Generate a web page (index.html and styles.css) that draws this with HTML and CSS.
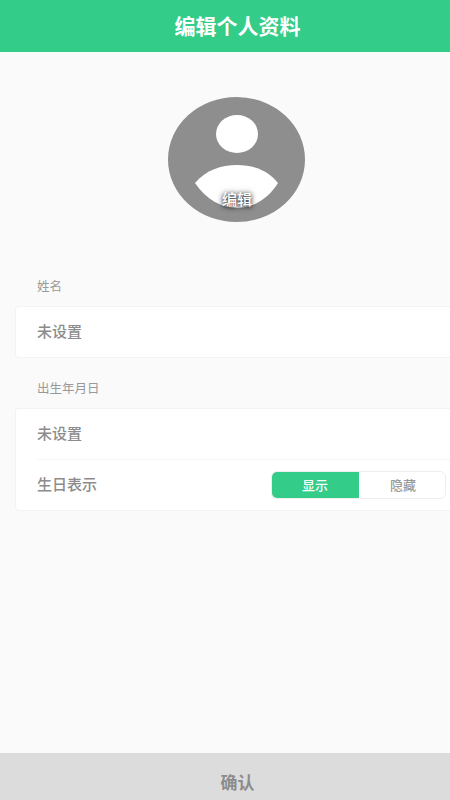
FILE: index.html
```html
<!DOCTYPE html>
<html lang="zh-CN">
<head>
<title>编辑个人资料</title>
<meta charset="utf-8">
<link rel="stylesheet" href="styles.css">
</head>
<body>

<div class="page">
	<h1 class="top_bar">编辑个人资料</h1>

	<div class="content">
		<div class="avatar">
			<svg width="137" height="125" viewBox="0 0 137 125">
				<ellipse cx="68.5" cy="62.5" rx="68.5" ry="62.5" fill="#8e8e8e"/>
				<ellipse cx="69" cy="37" rx="21" ry="19" fill="#fff"/>
				<path d="M27 86C38 73 53 68 69 68C85 68 100 73 110 86C100 102 85 111 69 111C53 111 38 102 27 86Z" fill="#fff"/>
			</svg>
			<span class="avatar_txt">编辑</span>
		</div>

		<p class="label">姓名</p>
		<div class="card">
			<div class="row"><span class="row_txt">未设置</span></div>
		</div>

		<p class="label">出生年月日</p>
		<div class="card">
			<div class="row row_line"><span class="row_txt">未设置</span></div>
			<div class="row">
				<span class="row_txt">生日表示</span>
				<div class="toggle">
					<span class="toggle_on">显示</span>
					<span class="toggle_off">隐藏</span>
				</div>
			</div>
		</div>
	</div>

	<div class="confirm">确认</div>
</div>

</body>
</html>
```

FILE: styles.css
```css
body,div,p,h1,span{margin:0;padding:0;}
body{background:#fafafa;font-family:"Noto Sans CJK SC","Liberation Sans",sans-serif;}
/**/
.page{display:flex;flex-direction:column;height:800px;overflow:hidden;}
.top_bar{height:52px;padding-left:25px;background:#33cc88;color:#fff;font-size:21px;font-weight:bold;line-height:51px;text-align:center;}
.content{flex:1;}

.avatar{position:relative;width:137px;height:125px;margin:45px 0 0 168px;}
.avatar svg{display:block;}
.avatar_txt{position:absolute;left:54px;top:92px;color:#fff;font-size:15px;font-weight:500;line-height:20px;text-shadow:0 1px 4px rgba(0,0,0,.9),0 0 6px rgba(0,0,0,.5);}

.label{padding-left:37px;color:#999;font-size:12.5px;line-height:20px;}
.avatar + .label{margin-top:54px;}
.card + .label{margin-top:20px;}

.card{margin:10px 0 0 15px;border:1px solid #f3f3f3;border-right:none;border-radius:4px 0 0 4px;background:#fff;}
.row{display:flex;align-items:center;justify-content:space-between;height:50px;margin-left:21px;padding-right:4px;color:#8c8c8c;font-size:15px;font-weight:500;}
.row_txt{padding-bottom:4px;}
.row_line{border-bottom:1px solid #f5f5f5;}

.toggle{display:flex;width:175px;height:28px;border:1px solid #eee;border-radius:6px;box-sizing:border-box;overflow:hidden;font-size:13px;line-height:26px;text-align:center;}
.toggle_on{width:88px;margin:-1px 0 -1px -1px;background:#33cc88;color:#fff;line-height:27px;}
.toggle_off{flex:1;padding-left:2px;color:#999;line-height:25px;}

.confirm{height:47px;padding-left:25px;background:#dcdcdc;color:#8c8c8c;font-size:17px;font-weight:bold;line-height:58px;text-align:center;}
```
